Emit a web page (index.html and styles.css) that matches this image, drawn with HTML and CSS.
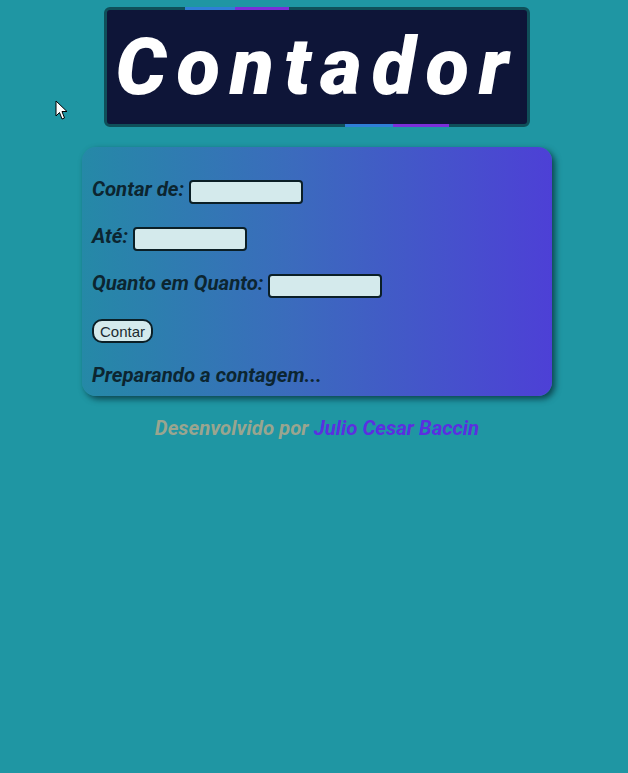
FILE: index.html
```html
<!DOCTYPE html>
<html lang="pt-BR">
<head>
<meta charset="utf-8">
<title>Contador</title>
<link rel="stylesheet" href="styles.css">
</head>
<body>
<div class="page">
  <header class="title-box">
    <span class="deco deco-top"></span>
    <h1 class="title">Contador</h1>
    <span class="deco deco-bottom"></span>
  </header>
  <section class="card">
    <div class="row"><label class="label" for="ini">Contar de:</label><input class="field" id="ini" type="text"></div>
    <div class="row"><label class="label" for="fim">Até:</label><input class="field" id="fim" type="text"></div>
    <div class="row"><label class="label" for="passo">Quanto em Quanto:</label><input class="field" id="passo" type="text"></div>
    <div class="row"><button class="btn" type="button">Contar</button></div>
    <div class="row"><p class="status">Preparando a contagem...</p></div>
  </section>
  <footer class="footer">Desenvolvido por <span class="author">Julio Cesar Baccin</span></footer>
</div>
<svg class="cursor" width="14" height="22" viewBox="0 0 14 22"><path d="M1 1 L1 16 L4.5 12.5 L7 19 L9.5 18 L7 11.5 L12 11.5 Z" fill="#fff" stroke="#000" stroke-width="1"/></svg>
</body>
</html>
```
FILE: styles.css
```css
html, body {
  margin: 0;
  padding: 0;
  background: #1f96a3;
  font-family: Roboto, "Liberation Sans", sans-serif;
}
.page {
  display: flex;
  flex-direction: column;
  align-items: center;
  padding: 7px 0 0 6px;
}
.title-box {
  position: relative;
  width: 420px;
  height: 114px;
  background: #0e1538;
  border: 3px solid #0f4f59;
  border-radius: 6px;
  display: flex;
  align-items: center;
  justify-content: center;
}
.title {
  margin: 0;
  color: #fff;
  font-family: Roboto, sans-serif;
  font-weight: 900;
  font-style: italic;
  font-size: 80px;
  letter-spacing: 10px;
  line-height: 1;
  padding-left: 0;
}
.deco {
  position: absolute;
  height: 3px;
  width: 104px;
}
.deco-top {
  top: -3px;
  left: 78px;
  background: linear-gradient(90deg, #2f7fd6 0 48%, #7b2fd8 48% 100%);
}
.deco-bottom {
  bottom: -3px;
  left: 238px;
  background: linear-gradient(90deg, #2f7fd6 0 46%, #7b2fd8 46% 100%);
}
.card {
  margin-top: 20px;
  width: 450px;
  height: 219px;
  padding: 30px 10px 0;
  border-radius: 14px;
  background: linear-gradient(90deg, #2589a7 0%, #3b6bbd 45%, #4d40d6 100%);
  box-shadow: 3px 3px 6px rgba(5, 40, 50, 0.75);
  display: flex;
  flex-direction: column;
  gap: 23px;
}
.row {
  height: 24px;
  display: flex;
  align-items: center;
  gap: 5px;
}
.label, .status {
  font-weight: 700;
  font-style: italic;
  font-size: 20.4px;
  color: #0c2530;
  margin: 0;
}
.field {
  box-sizing: border-box;
  width: 114px;
  height: 24px;
  background: #d4eaec;
  border: 2px solid #0b1f26;
  border-radius: 4px;
  padding: 0 4px;
  margin: 5px 0 0;
}
.btn {
  box-sizing: border-box;
  height: 24px;
  padding: 0 6px;
  background: #d4eaec;
  border: 2px solid #0b1f26;
  border-radius: 10px;
  font-family: "Liberation Sans", Arial, sans-serif;
  font-size: 15px;
  color: #1b2a30;
  margin-top: 2px;
}
.status {
  margin-top: -4px;
}
.footer {
  margin-top: 20px;
  font-weight: 700;
  font-style: italic;
  font-size: 20.4px;
  color: #9aa58f;
}
.author {
  color: #5b2fe0;
}
.cursor {
  position: absolute;
  left: 55px;
  top: 100px;
}
```
